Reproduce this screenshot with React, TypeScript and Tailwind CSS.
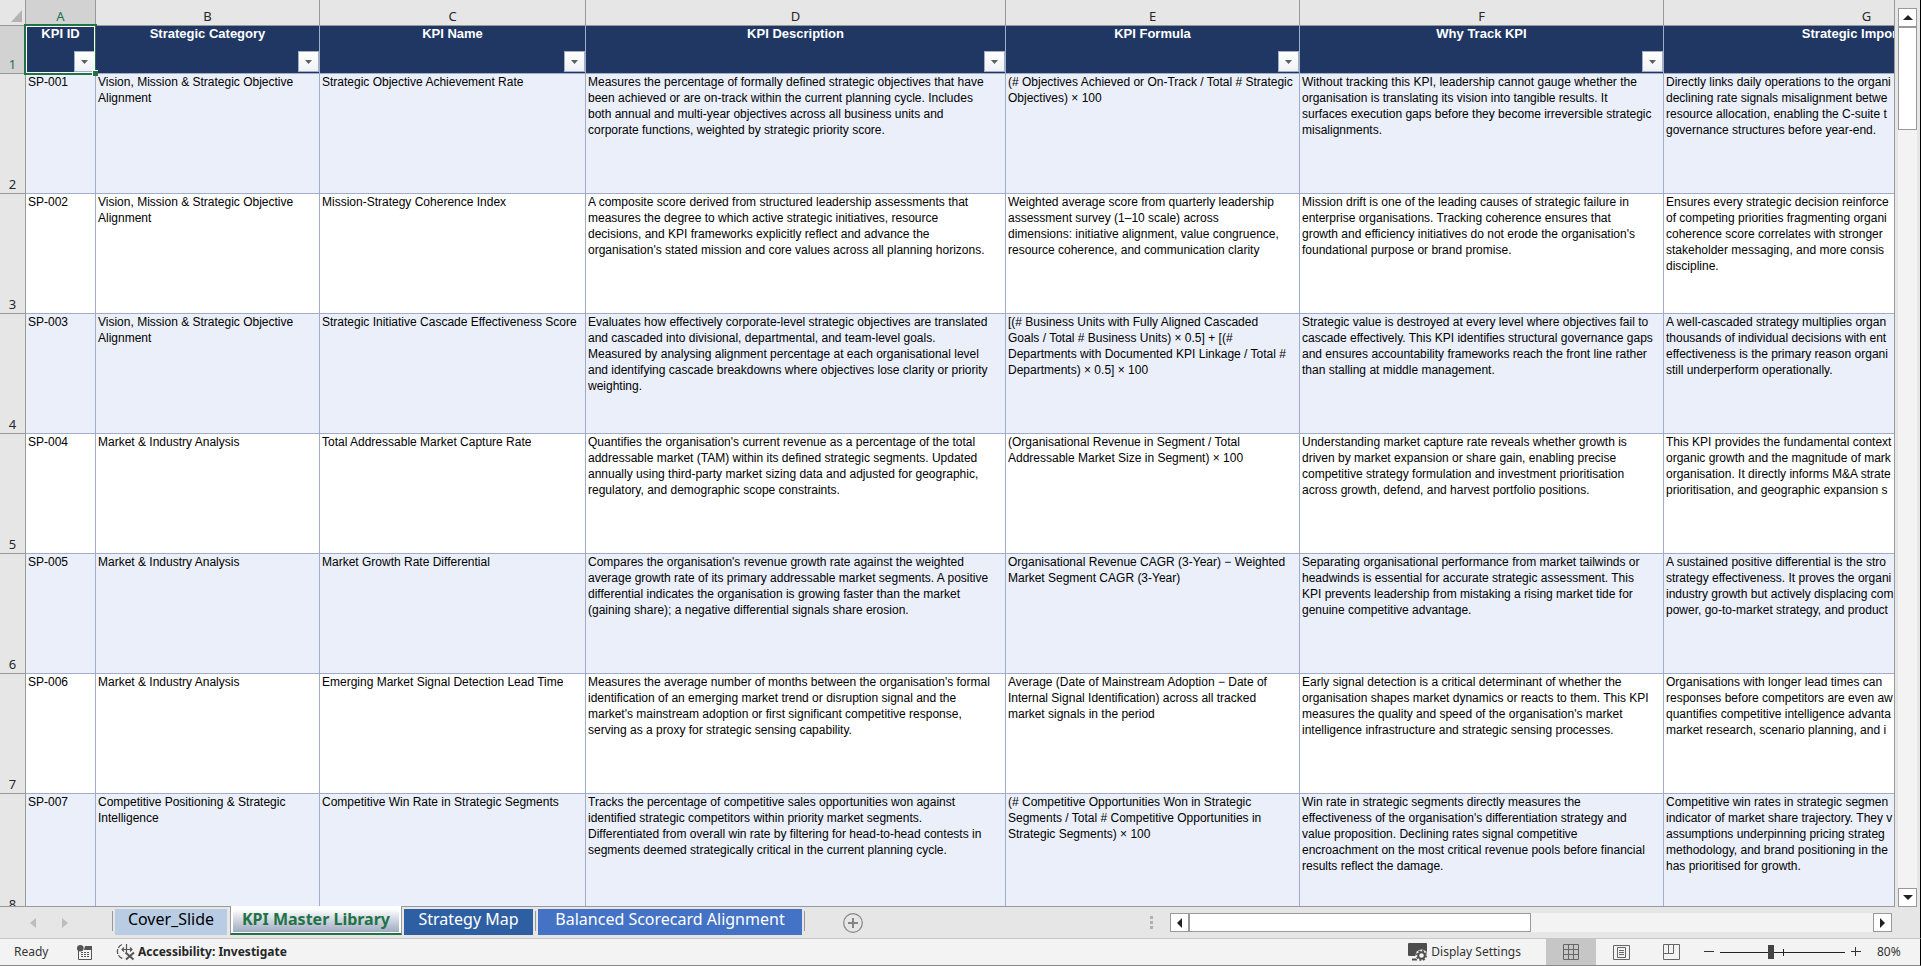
import React from "react"

const columns = [
  { letter: "A", title: "KPI ID", width: "w-[70px]" },
  { letter: "B", title: "Strategic Category", width: "w-[224px]" },
  { letter: "C", title: "KPI Name", width: "w-[266px]" },
  { letter: "D", title: "KPI Description", width: "w-[420px]" },
  { letter: "E", title: "KPI Formula", width: "w-[294px]" },
  { letter: "F", title: "Why Track KPI", width: "w-[364px]" },
  { letter: "G", title: "Strategic Importance", width: "w-[406px]" },
]

const rows = [
  [
    "SP-001",
    "Vision, Mission & Strategic Objective\nAlignment",
    "Strategic Objective Achievement Rate",
    "Measures the percentage of formally defined strategic objectives that have\nbeen achieved or are on-track within the current planning cycle. Includes\nboth annual and multi-year objectives across all business units and\ncorporate functions, weighted by strategic priority score.",
    "(# Objectives Achieved or On-Track / Total # Strategic\nObjectives) × 100",
    "Without tracking this KPI, leadership cannot gauge whether the\norganisation is translating its vision into tangible results. It\nsurfaces execution gaps before they become irreversible strategic\nmisalignments.",
    "Directly links daily operations to the organi\ndeclining rate signals misalignment betwe\nresource allocation, enabling the C-suite t\ngovernance structures before year-end.",
  ],
  [
    "SP-002",
    "Vision, Mission & Strategic Objective\nAlignment",
    "Mission-Strategy Coherence Index",
    "A composite score derived from structured leadership assessments that\nmeasures the degree to which active strategic initiatives, resource\ndecisions, and KPI frameworks explicitly reflect and advance the\norganisation's stated mission and core values across all planning horizons.",
    "Weighted average score from quarterly leadership\nassessment survey (1–10 scale) across\ndimensions: initiative alignment, value congruence,\nresource coherence, and communication clarity",
    "Mission drift is one of the leading causes of strategic failure in\nenterprise organisations. Tracking coherence ensures that\ngrowth and efficiency initiatives do not erode the organisation's\nfoundational purpose or brand promise.",
    "Ensures every strategic decision reinforce\nof competing priorities fragmenting organi\ncoherence score correlates with stronger\nstakeholder messaging, and more consis\ndiscipline.",
  ],
  [
    "SP-003",
    "Vision, Mission & Strategic Objective\nAlignment",
    "Strategic Initiative Cascade Effectiveness Score",
    "Evaluates how effectively corporate-level strategic objectives are translated\nand cascaded into divisional, departmental, and team-level goals.\nMeasured by analysing alignment percentage at each organisational level\nand identifying cascade breakdowns where objectives lose clarity or priority\nweighting.",
    "[(# Business Units with Fully Aligned Cascaded\nGoals / Total # Business Units) × 0.5] + [(#\nDepartments with Documented KPI Linkage / Total #\nDepartments) × 0.5] × 100",
    "Strategic value is destroyed at every level where objectives fail to\ncascade effectively. This KPI identifies structural governance gaps\nand ensures accountability frameworks reach the front line rather\nthan stalling at middle management.",
    "A well-cascaded strategy multiplies organ\nthousands of individual decisions with ent\neffectiveness is the primary reason organi\nstill underperform operationally.",
  ],
  [
    "SP-004",
    "Market & Industry Analysis",
    "Total Addressable Market Capture Rate",
    "Quantifies the organisation's current revenue as a percentage of the total\naddressable market (TAM) within its defined strategic segments. Updated\nannually using third-party market sizing data and adjusted for geographic,\nregulatory, and demographic scope constraints.",
    "(Organisational Revenue in Segment / Total\nAddressable Market Size in Segment) × 100",
    "Understanding market capture rate reveals whether growth is\ndriven by market expansion or share gain, enabling precise\ncompetitive strategy formulation and investment prioritisation\nacross growth, defend, and harvest portfolio positions.",
    "This KPI provides the fundamental context\norganic growth and the magnitude of mark\norganisation. It directly informs M&A strate\nprioritisation, and geographic expansion s",
  ],
  [
    "SP-005",
    "Market & Industry Analysis",
    "Market Growth Rate Differential",
    "Compares the organisation's revenue growth rate against the weighted\naverage growth rate of its primary addressable market segments. A positive\ndifferential indicates the organisation is growing faster than the market\n(gaining share); a negative differential signals share erosion.",
    "Organisational Revenue CAGR (3-Year) − Weighted\nMarket Segment CAGR (3-Year)",
    "Separating organisational performance from market tailwinds or\nheadwinds is essential for accurate strategic assessment. This\nKPI prevents leadership from mistaking a rising market tide for\ngenuine competitive advantage.",
    "A sustained positive differential is the stro\nstrategy effectiveness. It proves the organi\nindustry growth but actively displacing com\npower, go-to-market strategy, and product",
  ],
  [
    "SP-006",
    "Market & Industry Analysis",
    "Emerging Market Signal Detection Lead Time",
    "Measures the average number of months between the organisation's formal\nidentification of an emerging market trend or disruption signal and the\nmarket's mainstream adoption or first significant competitive response,\nserving as a proxy for strategic sensing capability.",
    "Average (Date of Mainstream Adoption − Date of\nInternal Signal Identification) across all tracked\nmarket signals in the period",
    "Early signal detection is a critical determinant of whether the\norganisation shapes market dynamics or reacts to them. This KPI\nmeasures the quality and speed of the organisation's market\nintelligence infrastructure and strategic sensing processes.",
    "Organisations with longer lead times can\nresponses before competitors are even aw\nquantifies competitive intelligence advanta\nmarket research, scenario planning, and i",
  ],
  [
    "SP-007",
    "Competitive Positioning & Strategic\nIntelligence",
    "Competitive Win Rate in Strategic Segments",
    "Tracks the percentage of competitive sales opportunities won against\nidentified strategic competitors within priority market segments.\nDifferentiated from overall win rate by filtering for head-to-head contests in\nsegments deemed strategically critical in the current planning cycle.",
    "(# Competitive Opportunities Won in Strategic\nSegments / Total # Competitive Opportunities in\nStrategic Segments) × 100",
    "Win rate in strategic segments directly measures the\neffectiveness of the organisation's differentiation strategy and\nvalue proposition. Declining rates signal competitive\nencroachment on the most critical revenue pools before financial\nresults reflect the damage.",
    "Competitive win rates in strategic segmen\nindicator of market share trajectory. They v\nassumptions underpinning pricing strateg\nmethodology, and brand positioning in the\nhas prioritised for growth.",
  ],
]

const FilterButton = ({ title }: { title: string }) => (
  <button
    aria-label={`Filter ${title}`}
    className="absolute right-0 bottom-px flex h-[21px] w-[21px] items-center justify-center border border-[#a3aec4] bg-linear-to-b from-white to-[#eef1f6]"
  >
    <svg width="7" height="4" viewBox="0 0 7 4">
      <path d="M0 0h7L3.5 4z" fill="#5f5f5f" />
    </svg>
  </button>
)

const Grid = () => (
  <div className="min-w-0 flex-1 overflow-hidden border-r border-b border-[#999999] bg-white">
    <table className="w-[2070px] table-fixed border-separate border-spacing-0">
      <colgroup>
        <col className="w-[26px]" />
        {columns.map((col) => (
          <col key={col.letter} className={col.width} />
        ))}
      </colgroup>
      <thead>
        <tr className="h-[26px] bg-[#e6e6e6] font-['Noto_Sans',sans-serif] text-[13px] leading-4 text-[#262626]">
          <td className="relative border-r border-b border-[#999999] p-0">
            <svg width="11" height="12" viewBox="0 0 11 12" className="absolute right-[3px] bottom-[3px]">
              <path d="M11 0v12H0z" fill="#b4b4b4" />
            </svg>
          </td>
          {columns.map((col) => (
            <th
              key={col.letter}
              scope="col"
              className={
                col.letter === "A"
                  ? "border-r border-b border-[#999999] bg-[#d2d2d2] p-0 pt-1.5 font-normal text-[#217346]"
                  : "border-r border-b border-[#999999] p-0 pt-1.5 font-normal"
              }
            >
              {col.letter}
            </th>
          ))}
        </tr>
        <tr className="h-12">
          <th
            scope="row"
            className="border-r border-b border-[#999999] bg-[#d2d2d2] p-0 pb-px align-bottom font-['Noto_Sans',sans-serif] text-[13px] leading-4 font-normal text-[#217346]"
          >
            1
          </th>
          {columns.map((col) => (
            <th
              key={col.letter}
              scope="col"
              className="relative border-r border-b border-[#9fadcb] bg-[#203764] p-0 align-top text-[13px] leading-4 font-bold text-white"
            >
              {col.title}
              <FilterButton title={col.title} />
              {col.letter === "A" && (
                <>
                  <span className="pointer-events-none absolute -inset-0.5 border-2 border-[#217346]" />
                  <span className="pointer-events-none absolute inset-0 border border-white" />
                  <span className="absolute -right-[3px] -bottom-[3px] z-10 h-[6px] w-[6px] border-t border-l border-white bg-[#217346]" />
                </>
              )}
            </th>
          ))}
        </tr>
      </thead>
      <tbody>
        {rows.map((row, i) => (
          <tr key={row[0]} className={i % 2 === 0 ? "h-[120px] bg-[#eaeffa]" : "h-[120px] bg-white"}>
            <th
              scope="row"
              className="border-r border-b border-[#999999] bg-[#e6e6e6] p-0 pb-px align-bottom font-['Noto_Sans',sans-serif] text-[13px] leading-4 font-normal text-[#262626]"
            >
              {i + 2}
            </th>
            {row.map((cell, j) => (
              <td key={j} className="border-r border-b border-[#9fadcb] p-0 pl-0.5 align-top text-xs leading-4 whitespace-pre text-black">
                {cell}
              </td>
            ))}
          </tr>
        ))}
      </tbody>
    </table>
  </div>
)

const VerticalScrollbar = () => (
  <div className="flex w-[26px] shrink-0 flex-col border-r border-black bg-[#e6e6e6] pt-2 pr-[3px] pl-[3px]">
    <div className="flex flex-1 flex-col bg-[#f3f3f3]">
      <button aria-label="Scroll up" className="flex h-[19px] items-center justify-center border border-[#999999] bg-white">
        <svg width="10" height="5" viewBox="0 0 10 5">
          <path d="M5 0l5 5H0z" fill="#222" />
        </svg>
      </button>
      <div className="h-[103px] border border-[#999999] bg-white" />
      <div className="flex-1" />
      <button aria-label="Scroll down" className="flex h-[19px] items-center justify-center border border-[#999999] bg-white">
        <svg width="10" height="5" viewBox="0 0 10 5">
          <path d="M0 0h10L5 5z" fill="#222" />
        </svg>
      </button>
    </div>
  </div>
)

const TabBar = () => (
  <div className="flex h-8 shrink-0 border-r border-b border-r-black border-b-[#c6c6c6] bg-[#e6e6e6] font-['Noto_Sans',sans-serif] text-base leading-5">
    <div className="flex h-[31px] w-[112px] items-center gap-[26px] pl-[30px]">
      <button aria-label="Previous sheet">
        <svg width="6" height="10" viewBox="0 0 6 10">
          <path d="M6 0v10L0 5z" fill="#bdbdbd" />
        </svg>
      </button>
      <button aria-label="Next sheet">
        <svg width="6" height="10" viewBox="0 0 6 10">
          <path d="M0 0v10l6-5z" fill="#bdbdbd" />
        </svg>
      </button>
    </div>
    <nav className="flex h-7">
      <div className="my-1 w-px bg-[#999999]" />
      <button className="mt-0.5 mr-[3px] ml-0.5 w-[112px] bg-[#b8cce4] pb-1.5 text-black">Cover_Slide</button>
      <button className="-mt-px w-[172px] border-x border-b-2 border-x-[#999999] border-b-[#217346] bg-white px-0.5 pt-[3px] pb-px font-bold text-[#217346]">
        <span className="block h-full bg-linear-to-b from-white to-[#a0abc0]">KPI Master Library</span>
      </button>
      <button className="mx-0.5 mt-0.5 w-[129px] bg-[#2e5fa3] pb-1.5 text-white">Strategy Map</button>
      <div className="my-1 w-px bg-[#999999]" />
      <button className="mx-0.5 mt-0.5 w-[264px] bg-[#4472c4] pb-1.5 text-white">Balanced Scorecard Alignment</button>
      <div className="my-1 w-px bg-[#999999]" />
    </nav>
    <button aria-label="New sheet" className="ml-[38px] self-center">
      <svg width="20" height="20" viewBox="0 0 20 20" fill="none" stroke="#858585">
        <circle cx="10" cy="10" r="9.3" strokeWidth="1.2" />
        <path d="M10 5v10M5 10h10" strokeWidth="2" />
      </svg>
    </button>
    <div className="flex-1" />
    <div className="flex items-center pr-7">
      <svg width="3" height="13" viewBox="0 0 3 13" className="mr-[17px]" fill="#b0b0b0">
        <path d="M0 0h3v3H0zM0 5h3v3H0zM0 10h3v3H0z" />
      </svg>
      <div className="flex h-[19px] w-[722px] bg-[#f3f3f3]">
        <button aria-label="Scroll left" className="flex w-[19px] items-center justify-center border border-[#999999] bg-white">
          <svg width="5" height="10" viewBox="0 0 5 10">
            <path d="M5 0v10L0 5z" fill="#222" />
          </svg>
        </button>
        <div className="w-[342px] border border-[#999999] bg-white" />
        <div className="flex-1" />
        <button aria-label="Scroll right" className="flex w-[19px] items-center justify-center border border-[#999999] bg-white">
          <svg width="5" height="10" viewBox="0 0 5 10">
            <path d="M0 0v10l5-5z" fill="#222" />
          </svg>
        </button>
      </div>
    </div>
  </div>
)

const StatusBar = () => (
  <div className="flex h-[27px] shrink-0 items-center border-r border-b border-r-black border-b-[#8a8a8a] bg-[#f3f3f3] font-['Noto_Sans',sans-serif] text-xs leading-5 text-[#333333]">
    <span className="w-[77px] pl-3.5">Ready</span>
    <button aria-label="Record macro">
      <svg width="15" height="15" viewBox="0 0 15 15">
        <path d="M1.5 6v8.500h13V1" fill="none" stroke="#555" />
        <path d="M8 1h7v4H7z" fill="#555" />
        <circle cx="3.300" cy="3.300" r="3.300" fill="#555" />
        <path d="M4 7.500h2M7 7.500h2M10 7.500h2M4 9.500h2M7 9.500h2M10 9.500h2M4 11.500h2M7 11.500h2M10 11.500h2" stroke="#555" />
      </svg>
    </button>
    <button className="ml-6 flex items-center gap-[3px] font-bold text-[#262626]">
      <svg width="19" height="18" viewBox="0 0 19 18" fill="none" stroke="#555">
        <path d="M6 1.500A7.500 7.500 0 0 0 6.500 15.500" strokeWidth="1.300" strokeDasharray="5 1.300" />
        <path d="M10.500 1v5M6 6.500h10M8 4.500l-2 2 2 2M14 4.500l2 2-2 2M10.500 6.500v3" strokeWidth="1.200" />
        <path d="M9.500 9.500l8 7M18 9.500l-8 7" strokeWidth="2" />
      </svg>
      Accessibility: Investigate
    </button>
    <div className="flex-1" />
    <button className="flex items-center gap-[3px]">
      <svg width="20" height="18" viewBox="0 0 20 18">
        <path d="M1 0h17a1 1 0 0 1 1 1v12H1a1 1 0 0 1-1-1V1a1 1 0 0 1 1-1z" fill="#4d4d4d" />
        <path d="M4 16.500h5" stroke="#4d4d4d" strokeWidth="2" />
        <circle cx="13.500" cy="12.500" r="6" fill="#f3f3f3" />
        <circle cx="13.500" cy="12.500" r="3.300" fill="none" stroke="#4d4d4d" strokeWidth="2" />
        <circle cx="13.500" cy="12.500" r="4.700" fill="none" stroke="#4d4d4d" strokeWidth="1.500" strokeDasharray="2 1.700" />
      </svg>
      Display Settings
    </button>
    <div className="ml-[25px] flex h-full">
      <button aria-label="Normal view" className="flex w-[50px] items-center justify-center bg-[#c6c6c6]">
        <svg width="16" height="16" viewBox="0 0 16 16" fill="none" stroke="#666">
          <path d="M.5.5h15v15H.5zM5.500.5v15M10.500.5v15M.5 5.500h15M.5 10.500h15" />
        </svg>
      </button>
      <button aria-label="Page layout view" className="flex w-[50px] items-center justify-center">
        <svg width="17" height="15" viewBox="0 0 17 15" fill="none" stroke="#666">
          <path d="M.5.5h16v14H.5zM4.500 2.500h8v10h-8zM6 5.500h5M6 7.500h5M6 9.500h5" />
        </svg>
      </button>
      <button aria-label="Page break preview" className="flex w-[50px] items-center justify-center">
        <svg width="17" height="16" viewBox="0 0 17 16" fill="none" stroke="#666">
          <path d="M.5.5h16v15H.5zM5.500.5v9M10.500.5v9M.5 9.500h10" />
        </svg>
      </button>
    </div>
    <button aria-label="Zoom out" className="ml-2">
      <svg width="10" height="10" viewBox="0 0 10 10">
        <path d="M0 4.500h10" stroke="#333" />
      </svg>
    </button>
    <label className="relative mx-1.5 flex h-[14px] w-[125px] items-center">
      <input
        type="range"
        aria-label="Zoom"
        min={10}
        max={150}
        defaultValue={66}
        className="h-[14px] w-full appearance-none bg-transparent [&::-webkit-slider-runnable-track]:h-px [&::-webkit-slider-runnable-track]:bg-[#222] [&::-webkit-slider-thumb]:-mt-[7px] [&::-webkit-slider-thumb]:h-[14px] [&::-webkit-slider-thumb]:w-[6px] [&::-webkit-slider-thumb]:appearance-none [&::-webkit-slider-thumb]:bg-[#444]"
      />
      <span className="absolute left-1/2 h-[7px] w-px bg-[#222]" />
    </label>
    <button aria-label="Zoom in">
      <svg width="10" height="10" viewBox="0 0 10 10">
        <path d="M0 4.500h10M4.500 0v9" stroke="#333" />
      </svg>
    </button>
    <span className="w-[59px] pl-4">80%</span>
  </div>
)

export default function App() {
  return (
    <div className="flex h-screen flex-col overflow-hidden bg-[#e6e6e6] font-['Liberation_Sans',Arial,sans-serif]">
      <div className="flex min-h-0 flex-1">
        <Grid />
        <VerticalScrollbar />
      </div>
      <TabBar />
      <StatusBar />
    </div>
  )
}
